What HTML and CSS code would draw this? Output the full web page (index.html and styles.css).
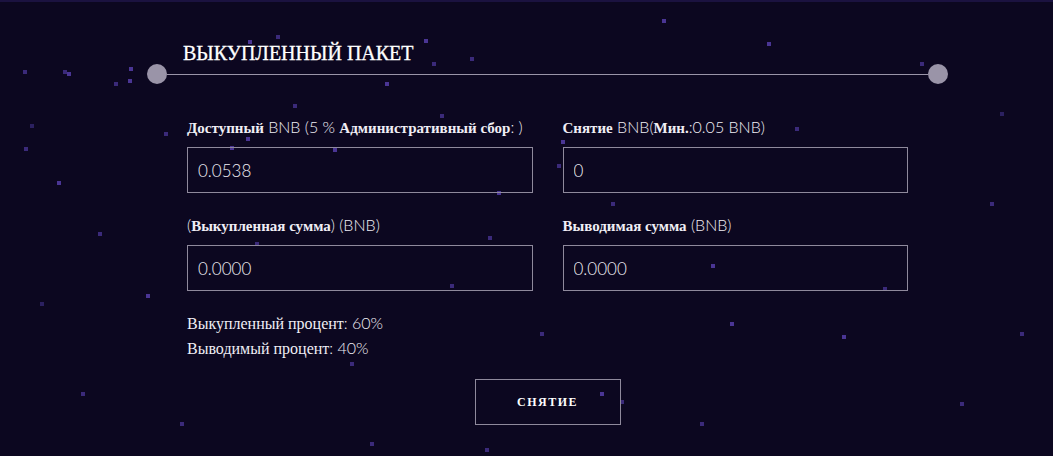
FILE: index.html
```html
<!DOCTYPE html>
<html>
<head>
    <title>Выкупленный пакет</title>
    <meta charset="UTF-8">
    <meta name="viewport" content="width=device-width, initial-scale=1.0">
    <link rel="stylesheet" href="styles.css">
</head>
<body>
<div class="stars"></div>
<div class="page">
    <div class="header">
        <h2 class="title">ВЫКУПЛЕННЫЙ ПАКЕТ</h2>
        <div class="rule">
            <span class="dot"></span>
            <span class="line"></span>
            <span class="dot"></span>
        </div>
    </div>

    <div class="form">
        <div class="grid">
            <div class="field">
                <label><span class="ru">Доступный</span> BNB (5 % <span class="ru">Административный сбор</span>: )</label>
                <input type="text" value="0.0538">
            </div>
            <div class="field">
                <label><span class="ru">Снятие</span> BNB(<span class="ru">Мин.</span>:0.05 BNB)</label>
                <input type="text" value="0">
            </div>
            <div class="field">
                <label>(<span class="ru">Выкупленная сумма</span>) (BNB)</label>
                <input type="text" value="0.0000">
            </div>
            <div class="field">
                <label><span class="ru">Выводимая сумма</span> (BNB)</label>
                <input type="text" value="0.0000">
            </div>
        </div>

        <div class="percents">
            <p><span class="ru-light">Выкупленный процент</span>: 60%</p>
            <p><span class="ru-light">Выводимый процент</span>: 40%</p>
        </div>

        <div class="actions">
            <button class="btn">СНЯТИЕ</button>
        </div>
    </div>
</div>
</body>
</html>
```

FILE: styles.css
```css
body {
    margin: 0;
    height: 456px;
    overflow: hidden;
    background-color: #0c0720;
    border-top: 2px solid #1b1240;
    box-sizing: border-box;
    font-family: "Lato", "DejaVu Sans", sans-serif;
    font-weight: 300;
    color: #f0eef5;
    position: relative;
}

/* decorative star field behind everything */
.stars {
    position: absolute;
    left: 0;
    top: 0;
    width: 4px;
    height: 4px;
    background: transparent;
    box-shadow:
        23px 68px #3b2a7a, 63px 68px #3b2a7a, 67px 70px #4a3594, 129px 65px #4a3594,
        114px 80px #3b2a7a, 128px 77px #4a3594, 24px 145px #3b2a7a, 57px 179px #4a3594,
        30px 122px #2b2060, 164px 130px #3b2a7a, 230px 144px #4a3594, 246px 135px #4a3594,
        293px 102px #3b2a7a, 276px 33px #3b2a7a, 248px 38px #4a3594, 255px 240px #3b2a7a,
        146px 292px #4a3594, 98px 230px #3b2a7a, 385px 80px #4a3594, 333px 146px #4a3594,
        424px 37px #4a3594, 432px 60px #3b2a7a, 470px 55px #3b2a7a, 440px 112px #3b2a7a,
        488px 234px #3b2a7a, 450px 282px #3b2a7a, 497px 189px #4a3594, 561px 138px #4a3594,
        557px 162px #3b2a7a, 611px 200px #3b2a7a, 662px 17px #4a3594, 767px 40px #4a3594,
        842px 333px #4a3594, 711px 262px #4a3594, 883px 285px #3b2a7a, 600px 390px #4a3594,
        620px 398px #3b2a7a, 485px 446px #3b2a7a, 370px 440px #3b2a7a, 700px 420px #3b2a7a,
        795px 125px #3b2a7a, 990px 200px #3b2a7a, 1020px 330px #3b2a7a, 960px 400px #3b2a7a,
        81px 390px #3b2a7a, 40px 300px #2b2060, 350px 360px #3b2a7a, 180px 420px #3b2a7a,
        920px 60px #3b2a7a, 1000px 110px #2b2060, 730px 320px #4a3594, 540px 330px #3b2a7a;
}

.page {
    position: relative;
}

.header {
    margin-left: 147px;
    width: 801px;
    padding-top: 40px;
}

.title {
    margin: 0 0 0 36px;
    font-family: "Liberation Serif", serif;
    font-weight: normal;
    font-size: 20px;
    line-height: 22px;
    color: #ffffff;
    -webkit-text-stroke: 0.3px #ffffff;
}

.rule {
    display: flex;
    align-items: center;
    height: 20px;
}
.dot {
    width: 20px;
    height: 20px;
    border-radius: 50%;
    background-color: #9a94a8;
    flex-shrink: 0;
}
.line {
    flex: 1;
    height: 1px;
    background-color: #9a94a8;
}

.form {
    margin-left: 187px;
    width: 721px;
    margin-top: 33px;
}

.grid {
    display: grid;
    grid-template-columns: 1fr 1fr;
    column-gap: 30px;
    row-gap: 22px;
}

.field label {
    display: block;
    height: 20px;
    line-height: 20px;
    font-size: 16px;
    margin-bottom: 10px;
    white-space: nowrap;
}

.ru {
    font-family: "Liberation Serif", serif;
    font-weight: bold;
    font-size: 15px;
}
.ru-light {
    font-family: "Liberation Serif", serif;
    font-weight: normal;
    font-size: 16px;
}

input[type=text] {
    display: block;
    width: 100%;
    height: 46px;
    box-sizing: border-box;
    padding: 0 10px;
    background: transparent;
    border: 1px solid #8f899c;
    color: #f0eef5;
    font-family: "Lato", "DejaVu Sans", sans-serif;
    font-weight: 300;
    font-size: 17px;
    outline: none;
}

.percents {
    margin-top: 20px;
}
.percents p {
    margin: 0;
    line-height: 24px;
    font-size: 16px;
}

.actions {
    display: flex;
    justify-content: center;
    margin-top: 18px;
}

.btn {
    width: 146px;
    height: 46px;
    background: transparent;
    border: 1px solid #8f899c;
    color: #ffffff;
    font-family: "Liberation Serif", serif;
    font-weight: bold;
    font-size: 12px;
    letter-spacing: 1.5px;
    cursor: pointer;
}
```
